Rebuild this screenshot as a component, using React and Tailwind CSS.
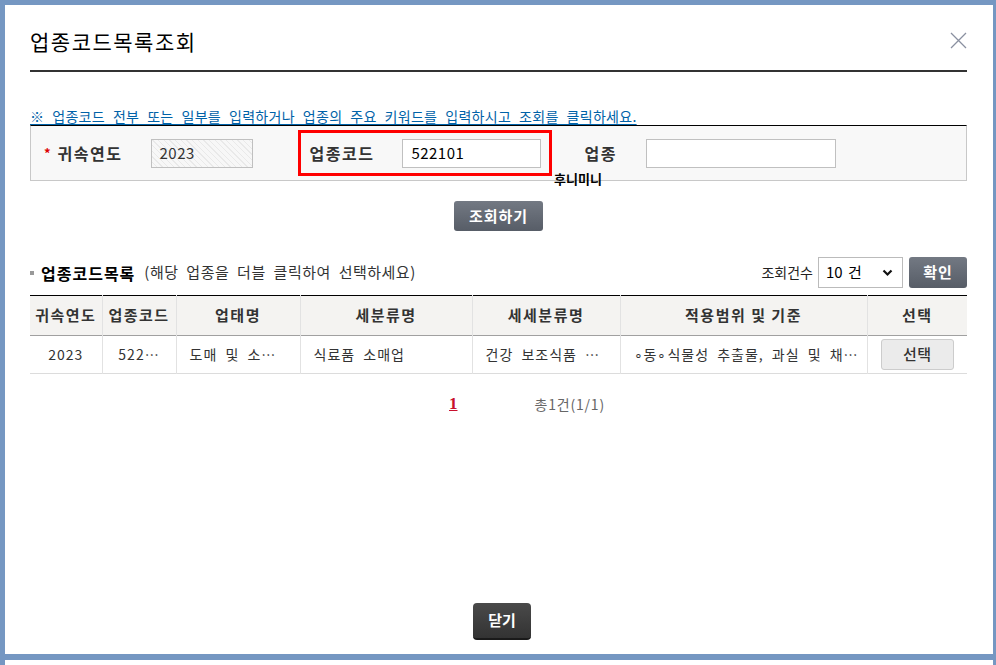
import React from 'react';

const KR = "font-['Noto_Sans_CJK_KR','Noto_Sans',sans-serif]";

const cols = [
  { w: 'w-[72px]', label: '귀속연도' },
  { w: 'w-[74px]', label: '업종코드' },
  { w: 'w-[124px]', label: '업태명' },
  { w: 'w-[172px]', label: '세분류명' },
  { w: 'w-[148px]', label: '세세분류명' },
  { w: 'w-[247px]', label: '적용범위 및 기준' },
  { w: 'w-[100px]', label: '선택' },
];

const row = ['2023', '522…', '도매 및 소…', '식료품 소매업', '건강 보조식품 …', '∘동∘식물성 추출물, 과실 및 채…'];

function CloseIcon() {
  return (
    <svg width="17" height="17" viewBox="0 0 17 17" className="text-[#8a90a0]">
      <path d="M1 1L16 16M16 1L1 16" stroke="currentColor" strokeWidth="1.3" />
    </svg>
  );
}

function GrayButton({ children, className }) {
  return (
    <button className={`bg-gradient-to-b from-[#737983] to-[#575d67] text-white font-bold text-[15px] rounded-[3px] ${className}`}>
      {children}
    </button>
  );
}

export default function App() {
  return (
    <div className={`h-screen w-full overflow-hidden bg-[#7597c2] pl-[5px] pr-[3px] pt-[5px] flex flex-col gap-[6px] ${KR} text-[#333]`}>
      <div className="h-[649px] shrink-0 bg-white pl-[25px] pr-[26px] flex flex-col">
        {/* header */}
        <div className="flex items-center justify-between pt-[21px] pb-[14px] border-b-2 border-[#333]">
          <h1 className="text-[21px] leading-[30px] tracking-[1.5px] text-black">업종코드목록조회</h1>
          <button className="mb-[2px]"><CloseIcon /></button>
        </div>

        {/* note */}
        <p className="mt-[35px] text-[14px] leading-[18px] tracking-[0.3px] text-[#0062a8] underline underline-offset-2 [word-spacing:4.5px]">
          ※ 업종코드 전부 또는 일부를 입력하거나 업종의 주요 키워드를 입력하시고 조회를 클릭하세요.
        </p>

        {/* search box */}
        <div className="relative h-[56px] border border-[#c8c8c8] border-t-black bg-[#f8f8f8] flex items-center">
          <span className="ml-[13px] text-[#d00] text-[13px] font-bold">*</span>
          <label className="ml-[7px] text-[16px] font-bold tracking-[1.5px]">귀속연도</label>
          <div className="ml-[29px] w-[102px] h-[29px] border border-[#c0c0c0] bg-[repeating-linear-gradient(45deg,#f7f7f7_0px,#f7f7f7_3px,#e9e9e9_3px,#e9e9e9_4px)] flex items-center pl-[7px] text-[15px] tracking-[0.5px] text-[#333]">
            2023
          </div>
          <div className="ml-[45px] w-[254px] h-[46px] border-[3px] border-[#ff0000] flex items-center pl-[8px]">
            <label className="text-[16px] font-bold tracking-[1.5px]">업종코드</label>
            <div className="ml-[28px] w-[139px] h-[29px] border border-[#c0c0c0] bg-white flex items-center pl-[8px] text-[15px] tracking-[0.5px] text-black">
              522101
            </div>
          </div>
          <label className="ml-[32px] text-[16px] font-bold tracking-[1.5px]">업종</label>
          <div className="ml-[29px] w-[190px] h-[29px] border border-[#c0c0c0] bg-white" />
          <span className="absolute left-[523px] top-[45px] text-[13px] leading-[16px] font-bold text-black">후니미니</span>
        </div>

        {/* search button */}
        <div className="mt-[20px] flex justify-center">
          <GrayButton className="w-[89px] h-[30px] tracking-[1px]">조회하기</GrayButton>
        </div>

        {/* list header */}
        <div className="mt-[26px] h-[31px] flex items-center">
          <span className="w-[4px] h-[4px] bg-[#999] mt-[1px]" />
          <span className="ml-[7px] text-[16px] font-bold text-black tracking-[1px]">업종코드목록</span>
          <span className="ml-[9px] text-[15px] tracking-[0.5px] text-[#333] [word-spacing:4px]">(해당 업종을 더블 클릭하여 선택하세요)</span>
          <div className="ml-auto flex items-center">
            <span className="text-[14px] text-[#222]">조회건수</span>
            <div className="ml-[5px] w-[85px] h-[31px] border border-[#bbb] bg-white flex items-center justify-between pl-[7px] pr-[9px]">
              <span className="text-[15px] text-black [word-spacing:2px]">10 건</span>
              <svg width="11" height="8" viewBox="0 0 11 8">
                <path d="M1.5 1.5L5.5 5.5L9.5 1.5" stroke="#111" strokeWidth="2.2" fill="none" />
              </svg>
            </div>
            <GrayButton className="ml-[6px] w-[58px] h-[31px] tracking-[1px]">확인</GrayButton>
          </div>
        </div>

        {/* table */}
        <table className="mt-[7px] w-full table-fixed border-collapse border-t border-black">
          <colgroup>
            {cols.map((c, i) => <col key={i} className={c.w} />)}
          </colgroup>
          <thead>
            <tr className="h-[40px] bg-[#f4f3f1] border-b border-[#a0a0a0]">
              {cols.map((c, i) => (
                <th key={i} className="border-l first:border-l-0 border-[#e2e2e2] text-[15px] font-bold tracking-[1.5px] text-[#333] p-0 whitespace-nowrap">
                  {c.label}
                </th>
              ))}
            </tr>
          </thead>
          <tbody>
            <tr className="h-[38px] border-b border-[#dcdcdc]">
              {row.map((t, i) => (
                <td key={i} className={`border-l first:border-l-0 border-[#e2e2e2] text-[14px] tracking-[1px] text-[#333] whitespace-nowrap [word-spacing:4px] ${i < 2 ? 'text-center' : 'pl-[13px]'}`}>
                  {t}
                </td>
              ))}
              <td className="border-l border-[#e2e2e2] text-center">
                <button className="w-[73px] h-[31px] rounded-[3px] border border-[#ccc] bg-[#ebebeb] text-[15px] tracking-[0.5px] text-[#333] font-medium">선택</button>
              </td>
            </tr>
          </tbody>
        </table>

        {/* paging */}
        <div className="mt-[21px] h-[18px] flex items-center">
          <a className="ml-[419px] font-['Liberation_Serif',serif] font-bold text-[17px] text-[#c8102e] underline">1</a>
          <span className="ml-[77px] text-[14px] tracking-[0.8px] text-[#666]">총1건(1/1)</span>
        </div>

        {/* close */}
        <div className="mt-auto mb-[14px]">
          <button className="ml-[443px] w-[58px] h-[37px] rounded-[4px] bg-gradient-to-b from-[#4a4a4a] to-[#333] border-b-2 border-[#1a1a1a] text-white font-bold text-[15px]">
            닫기
          </button>
        </div>
      </div>
      <div className="flex-1 bg-white" />
    </div>
  );
}
